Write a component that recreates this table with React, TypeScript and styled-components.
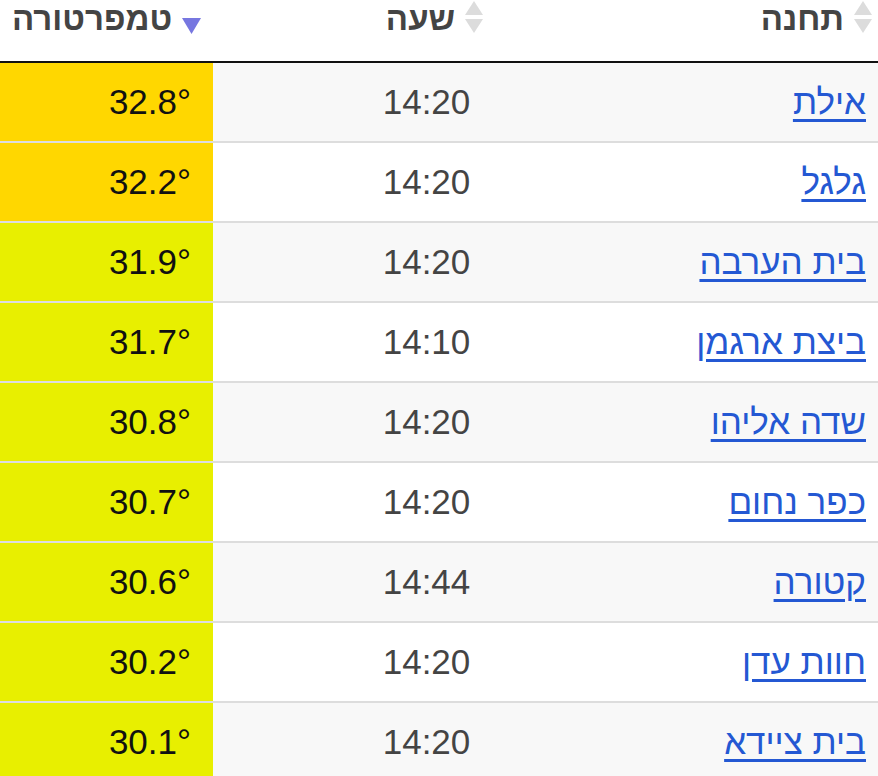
import React from 'react';
import styled, { createGlobalStyle } from 'styled-components';

const GlobalStyle = createGlobalStyle`
    html, body {
        margin: 0;
        padding: 0;
        background: #fff;
    }
    body {
        font-family: 'Liberation Sans', Arial, sans-serif;
    }
`;

const Table = styled.table`
    width: 878px;
    direction: rtl;
    border-collapse: collapse;
    table-layout: fixed;
    font-family: 'Liberation Sans', Arial, sans-serif;
    font-size: 35px;
`;

const HeadCell = styled.th<{ align: 'right' | 'center'; w?: number; shift?: number }>`
    height: 61px;
    padding: 0 ${(p) => (p.align === 'right' ? '6px' : '0')} 0 ${(p) => (p.shift ? `${p.shift}px` : '0')};
    vertical-align: top;
    text-align: ${(p) => p.align};
    width: ${(p) => (p.w ? `${p.w}px` : 'auto')};
    border-bottom: 2px solid #111;
    color: #444;
    font-size: 33px;
    font-weight: bold;
    white-space: nowrap;
`;

const HeadInner = styled.span`
    display: inline-flex;
    align-items: flex-start;
    gap: 10px;
    line-height: 38px;
`;

const SortIcon = styled.svg`
    flex: none;
    margin-top: 1px;
`;

const Row = styled.tr<{ striped: boolean }>`
    background: ${(p) => (p.striped ? '#f8f8f8' : '#fff')};
    border-top: 2px solid #ddd;
    &:first-child {
        border-top: none;
    }
`;

const Cell = styled.td`
    height: 78px;
    padding: 0;
    vertical-align: middle;
`;

const StationCell = styled(Cell)`
    text-align: right;
    padding-right: 12px;
`;

const StationLink = styled.a`
    color: #2458d3;
    text-decoration: underline;
    text-underline-offset: 5px;
`;

const TimeCell = styled(Cell)`
    text-align: center;
    color: #444;
`;

const TempCell = styled(Cell)<{ heat: string }>`
    background: ${(p) => p.heat};
    color: #111;
    text-align: right;
    padding-right: 22px;
    direction: ltr;
`;

type Station = { name: string; time: string; temp: number };

const stations: Station[] = [
    { name: 'אילת', time: '14:20', temp: 32.8 },
    { name: 'גלגל', time: '14:20', temp: 32.2 },
    { name: 'בית הערבה', time: '14:20', temp: 31.9 },
    { name: 'ביצת ארגמן', time: '14:10', temp: 31.7 },
    { name: 'שדה אליהו', time: '14:20', temp: 30.8 },
    { name: 'כפר נחום', time: '14:20', temp: 30.7 },
    { name: 'קטורה', time: '14:44', temp: 30.6 },
    { name: 'חוות עדן', time: '14:20', temp: 30.2 },
    { name: 'בית ציידא', time: '14:20', temp: 30.1 },
];

const heatColor = (t: number) => (t >= 32 ? '#ffd700' : '#e8ef00');

const BothArrows = () => (
    <SortIcon width="18" height="34" viewBox="0 0 18 34">
        <polygon points="9,0 18,14 0,14" fill="#dcdcdc" />
        <polygon points="0,18 18,18 9,32" fill="#dcdcdc" />
    </SortIcon>
);

const DownArrow = () => (
    <SortIcon width="19" height="34" viewBox="0 0 19 34">
        <polygon points="0,17 19,17 9.5,33" fill="#7777e0" />
    </SortIcon>
);

export default function App() {
    return (
        <>
            <GlobalStyle />
            <Table>
                <thead>
                    <tr>
                        <HeadCell align="right" w={232}>
                            <HeadInner>
                                <BothArrows />
                                תחנה
                            </HeadInner>
                        </HeadCell>
                        <HeadCell align="center" shift={16}>
                            <HeadInner>
                                <BothArrows />
                                שעה
                            </HeadInner>
                        </HeadCell>
                        <HeadCell align="center" w={213}>
                            <HeadInner>
                                <DownArrow />
                                טמפרטורה
                            </HeadInner>
                        </HeadCell>
                    </tr>
                </thead>
                <tbody>
                    {stations.map((s, i) => (
                        <Row key={s.name} striped={i % 2 === 0}>
                            <StationCell>
                                <StationLink href="#">{s.name}</StationLink>
                            </StationCell>
                            <TimeCell>{s.time}</TimeCell>
                            <TempCell heat={heatColor(s.temp)}>{s.temp.toFixed(1)}°</TempCell>
                        </Row>
                    ))}
                </tbody>
            </Table>
        </>
    );
}
